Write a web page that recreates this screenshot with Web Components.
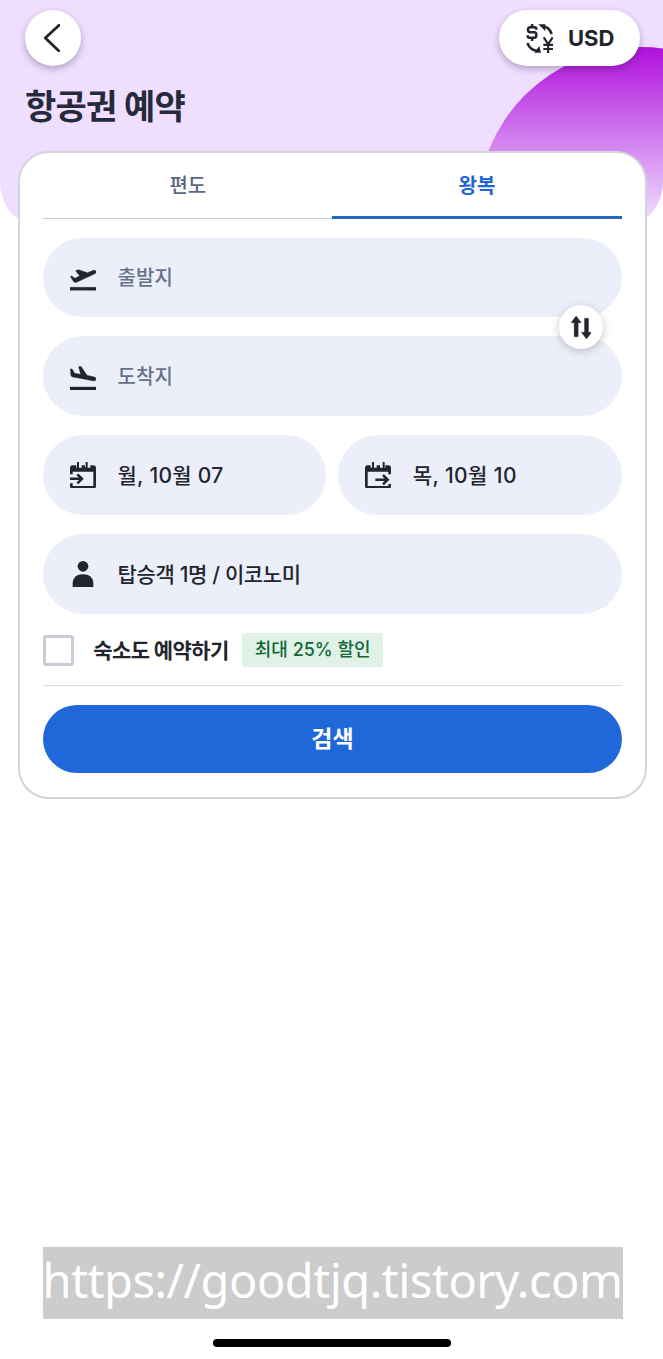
<!DOCTYPE html>
<html lang="ko">
<head>
<meta charset="utf-8">
<title>항공권 예약</title>
<style>
    html, body { margin: 0; padding: 0; background: #fff; }
    body {
        font-family: Inter, "Noto Sans CJK KR", sans-serif;
        color: #22252d;
    }
</style>
</head>
<body>

<flight-page>
    <page-header slot="header" heading="항공권 예약" currency="USD"></page-header>
    <search-card>
        <tab-bar slot="tabs">
            <tab-item>편도</tab-item>
            <tab-item selected>왕복</tab-item>
        </tab-bar>
        <route-fields>
            <form-field icon="takeoff" placeholder>출발지</form-field>
            <form-field icon="landing" placeholder>도착지</form-field>
        </route-fields>
        <field-row>
            <form-field icon="depart" style="--spacing: .3px">월, 10월 07</form-field>
            <form-field icon="return" style="--spacing: .4px">목, 10월 10</form-field>
        </field-row>
        <form-field icon="person" style="--spacing: -.35px">탑승객 1명 / 이코노미</form-field>
        <hotel-option badge="최대 25% 할인">숙소도 예약하기</hotel-option>
        <search-button slot="action">검색</search-button>
    </search-card>
    <site-footer slot="footer">https://goodtjq.tistory.com</site-footer>
</flight-page>

<script>
// name: [viewBox, width, height, markup]
const ICONS = {
    back: ['0 0 48 84', 16, 28,
        '<path d="M45 4 4 42l40 38" fill="none" stroke="currentColor" stroke-width="8.5" stroke-linecap="round" stroke-linejoin="round"/>'],
    currency: ['0 0 84 87', 28, 29, `
        <g fill="none" stroke="currentColor" stroke-width="7.5">
            <path d="M31 17V15Q31 10 25 10H13Q6 10 6 17T13 25H25Q31 25 31 33T25 41.500H12Q5 41.500 5 35V34M18.500 0V10M18.500 41V51"/>
            <path d="M49 7Q69 8 77 30"/>
            <path d="M4 57Q13 80 36 80"/>
            <path d="M53 40 66.500 60 80 40M66.500 58V87M52 62.500H81M52 75H81" stroke-width="6.500"/>
        </g>
        <path d="M37 1 58 1V22zM45 86H25L40 66z"/>`],
    takeoff: ['0 0 78 64', 26, 21.33,
        '<path d="M1 22.500Q3 20 6.500 21.500L15 28 29 20.500 18 7.500Q17 5 19.500 3.500L26 2 52 11 70 4Q76 2 78 6.500T75 14L20 40Q13 42 10 37zM0 55h78v9H0z" stroke="currentColor"/>'],
    landing: ['0 0 78 72', 26, 24,
        '<path d="M1 9Q4 7 8 11L14 22 32 24.500 26 3.500Q26 0 31 0.500 34 1 36 5L51 27.500 73 33Q79 35 78 40T72 45L8 33Q3 32 2.500 27zM0 63h78v9H0z" stroke="currentColor"/>'],
    depart: ['0 0 78 80', 26, 26.67, `
        <path d="M0 37V18Q0 10 8 10H19V17H21V0H27V17H35V10H45V17H47V0H53V17H61V10H70Q78 10 78 18V72Q78 80 70 80H8Q0 80 0 72V64H8V72H70V29H8V37z"/>
        <path d="M0 50.500H34M22 37 36 50.500 22 64" fill="none" stroke="currentColor" stroke-width="7.500"/>`],
    return: ['0 0 78 80', 26, 26.67, `
        <path d="M78 37V18Q78 10 70 10H61V17H59V0H53V17H45V10H35V17H27V0H21V17H17V10H8Q0 10 0 18V72Q0 80 8 80H70Q78 80 78 72V66H70V72H8V29H70V37z"/>
        <path d="M31 53H67M54 39 68 53 54 67" fill="none" stroke="currentColor" stroke-width="7.500"/>`],
    person: ['0 0 78 78', 26, 26,
        '<circle cx="39" cy="16" r="16"/><path d="M8 78V67C8 50 21 40 39 40S70 50 70 67V78z"/>'],
    swap: ['0 0 62 69', 20.67, 23,
        '<path d="M15.500 0 31 20H21.500V62H9.500V20H0zM46.500 69 31 49H40.500V7H52.500V49H62z" stroke="currentColor"/>']
};

function define(name, html, setup) {
    const template = document.createElement('template');
    template.innerHTML = html;

    customElements.define(name, class extends HTMLElement {
        constructor() {
            super();
            this.attachShadow({ mode: 'open' }).appendChild(template.content.cloneNode(true));
        }

        connectedCallback() {
            if (setup) setup(this, this.shadowRoot);
        }
    });
}

define('ui-icon', `
    <style>
        :host { display: block; flex: none; }
        svg { display: block; fill: currentColor; }
    </style>
    <svg aria-hidden="true"></svg>
`, (el, root) => {
    const [viewBox, width, height, markup] = ICONS[el.getAttribute('name')];
    const svg = root.querySelector('svg');
    svg.setAttribute('viewBox', viewBox);
    svg.setAttribute('width', width);
    svg.setAttribute('height', height);
    svg.innerHTML = markup;
});

define('flight-page', `
    <style>
        :host { display: grid; grid-template-columns: 663px; height: 1359px; overflow: hidden; }
        .backdrop {
            grid-area: 1 / 1;
            height: 223px;
            background: #efdefe;
            border-radius: 0 0 32px 32px / 0 0 42px 42px;
            overflow: hidden;
        }
        .backdrop svg { display: block; }
        .content { grid-area: 1 / 1; display: flex; flex-direction: column; height: 1359px; }
        ::slotted([slot=footer]) { margin-top: auto; }
    </style>
    <div class="backdrop">
        <svg width="663" height="223" viewBox="0 0 663 223">
            <linearGradient id="fade" gradientUnits="userSpaceOnUse" x1="0" y1="47" x2="0" y2="220">
                <stop offset="0" stop-color="#b010dc"/>
                <stop offset="1" stop-color="#efdefe"/>
            </linearGradient>
            <circle cx="641" cy="211" r="164" fill="url(#fade)"/>
        </svg>
    </div>
    <div class="content">
        <slot name="header"></slot>
        <slot></slot>
        <slot name="footer"></slot>
    </div>
`);

define('page-header', `
    <style>
        :host { display: block; height: 150.5px; padding: 10px 23px 0 25px; box-sizing: border-box; }
        .bar { display: flex; justify-content: space-between; }
        button {
            display: flex;
            align-items: center;
            height: 56px;
            padding: 0;
            border: 0;
            border-radius: 28px;
            background: #fff;
            color: #22252d;
            font: 700 22px/1 Inter, sans-serif;
            box-shadow: 0 3px 7px rgba(40, 20, 60, .3);
        }
        .back { width: 56px; justify-content: center; }
        .back ui-icon { margin-right: 3px; }
        .currency { width: 141px; padding-left: 27px; gap: 14px; box-sizing: border-box; }
        h1 {
            margin: 17px 0 0;
            font-size: 34px;
            line-height: 48px;
            font-weight: 700;
            letter-spacing: -.75px;
            color: #252b3b;
        }
    </style>
    <div class="bar">
        <button class="back" aria-label="뒤로"><ui-icon name="back"></ui-icon></button>
        <button class="currency"><ui-icon name="currency"></ui-icon><span></span></button>
    </div>
    <h1></h1>
`, (el, root) => {
    root.querySelector('span').textContent = el.getAttribute('currency');
    root.querySelector('h1').textContent = el.getAttribute('heading');
});

define('search-card', `
    <style>
        :host {
            display: flex;
            flex-direction: column;
            box-sizing: border-box;
            width: 629px;
            height: 648px;
            margin-left: 18px;
            padding: 0 23.4px 0 23.2px;
            background: #fff;
            border: 2px solid #d3d3dc;
            border-radius: 31px;
        }
        .fields { display: flex; flex-direction: column; gap: 19.2px; margin-top: 18.5px; }
        .action { margin-top: 18px; padding-top: 18.5px; border-top: 1px solid #dadbe0; }
    </style>
    <slot name="tabs"></slot>
    <div class="fields"><slot></slot></div>
    <div class="action"><slot name="action"></slot></div>
`);

define('tab-bar', `
    <style>
        :host { display: flex; height: 66.5px; box-sizing: border-box; box-shadow: inset 0 -1px #c9cbd2; }
    </style>
    <slot></slot>
`);

define('tab-item', `
    <style>
        :host {
            display: flex;
            flex: 1;
            justify-content: center;
            box-sizing: border-box;
            padding-top: 18px;
            font-size: 20px;
            line-height: 30px;
            font-weight: 500;
            color: #5c6882;
        }
        :host([selected]) { color: #1f66d6; font-weight: 700; border-bottom: 3px solid #2467c5; }
    </style>
    <slot></slot>
`);

define('form-field', `
    <style>
        :host {
            display: flex;
            flex: 1 1 auto;
            align-items: center;
            box-sizing: border-box;
            height: 79.7px;
            padding-left: 27px;
            border-radius: 40px;
            background: #eceff9;
            color: #22252d;
            font-size: 21px;
            line-height: 30px;
            font-weight: 500;
        }
        span { margin: 2px 0 0 21.3px; letter-spacing: var(--spacing, 0); white-space: nowrap; }
        :host([placeholder]) span { color: #66728a; font-size: 20px; letter-spacing: .15px; }
        ui-icon[name=takeoff] { margin-top: 5px; }
        ui-icon[name=landing] { margin-top: 3px; }
    </style>
    <ui-icon name="person"></ui-icon>
    <span><slot></slot></span>
`, (el, root) => {
    const icon = document.createElement('ui-icon');
    icon.setAttribute('name', el.getAttribute('icon'));
    root.querySelector('ui-icon').replaceWith(icon);
});

define('field-row', `
    <style>
        :host { display: flex; gap: 12px; }
        ::slotted(*) { flex: 1 1 0 !important; }
    </style>
    <slot></slot>
`);

// Origin and destination, with the swap button over the gap between them
define('route-fields', `
    <style>
        :host { display: flex; flex-direction: column; gap: 19.2px; position: relative; }
        button {
            position: absolute;
            right: 18.5px;
            top: 67.5px;
            display: flex;
            align-items: center;
            justify-content: center;
            width: 44px;
            height: 44px;
            padding: 0;
            border: 0;
            border-radius: 50%;
            background: #fff;
            color: #22252d;
            box-shadow: 0 2px 8px rgba(30, 35, 55, .25);
        }
    </style>
    <slot></slot>
    <button aria-label="출발지와 도착지 바꾸기"><ui-icon name="swap"></ui-icon></button>
`);

define('hotel-option', `
    <style>
        :host { display: flex; align-items: center; height: 34px; }
        .box { width: 31px; height: 31px; box-sizing: border-box; border: 3px solid #c9ccd6; border-radius: 3px; }
        .label { margin: -3px 0 0 19px; width: 136px; font-size: 21px; font-weight: 700; letter-spacing: -.6px; white-space: nowrap; }
        .badge {
            width: 141px;
            height: 34px;
            margin-left: 13px;
            border-radius: 3px;
            background: #e0f2e5;
            color: #14653a;
            font-size: 18px;
            line-height: 34px;
            font-weight: 500;
            text-align: center;
            white-space: nowrap;
        }
    </style>
    <span class="box" role="checkbox" aria-checked="false"></span>
    <span class="label"><slot></slot></span>
    <span class="badge"></span>
`, (el, root) => {
    root.querySelector('.badge').textContent = el.getAttribute('badge');
});

define('search-button', `
    <style>
        :host { display: block; }
        button {
            display: block;
            width: 100%;
            height: 68px;
            padding: 0 0 3px;
            border: 0;
            border-radius: 34px;
            background: #2067d9;
            color: #fff;
            font: inherit;
            font-size: 23px;
            font-weight: 700;
        }
    </style>
    <button><slot></slot></button>
`);

define('site-footer', `
    <style>
        :host { display: flex; flex-direction: column; align-items: center; }
        .address {
            width: 580px;
            height: 72px;
            margin-left: 2px;
            background: #ccc;
            color: #fff;
            font: 400 47px/66px "Noto Sans", sans-serif;
            letter-spacing: -.5px;
            text-align: center;
            white-space: nowrap;
        }
        .home { width: 238px; height: 8px; margin: 20px 0 12px 1px; border-radius: 4px; background: #000; }
    </style>
    <div class="address"><slot></slot></div>
    <div class="home"></div>
`);
</script>
</body>
</html>
